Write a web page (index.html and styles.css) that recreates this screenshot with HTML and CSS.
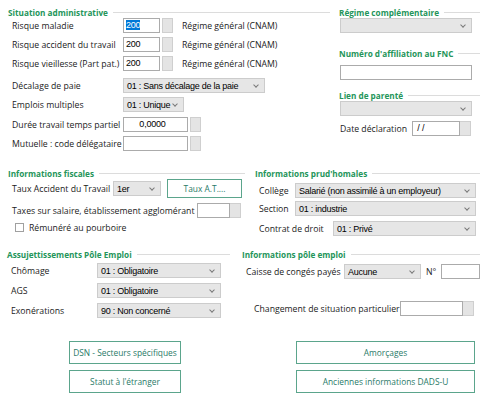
FILE: index.html
```html
<!DOCTYPE html>
<html>
<head>
    <link rel="stylesheet" href="styles.css">
</head>
<body>
    <div class="page">
        <!-- Situation administrative + side column -->
        <div class="section top">
            <div class="col col-admin">
                <div class="legend">Situation administrative</div>
                <div class="row">
                    <span class="lbl w-admin">Risque maladie</span>
                    <span class="inp w37"><span class="hl">200</span></span><span class="spin"></span>
                    <span class="note">Régime général (CNAM)</span>
                </div>
                <div class="row gap4">
                    <span class="lbl w-admin">Risque accident du travail</span>
                    <span class="inp w37">200</span><span class="spin"></span>
                    <span class="note">Régime général (CNAM)</span>
                </div>
                <div class="row gap4">
                    <span class="lbl w-admin">Risque vieillesse (Part pat.)</span>
                    <span class="inp w37">200</span><span class="spin"></span>
                    <span class="note">Régime général (CNAM)</span>
                </div>
                <div class="row gap7">
                    <span class="lbl w-admin">Décalage de paie</span>
                    <span class="sel w142">01 : Sans décalage de la paie</span>
                </div>
                <div class="row gap4">
                    <span class="lbl w-admin">Emplois multiples</span>
                    <span class="sel w61">01 : Unique</span>
                </div>
                <div class="row gap5">
                    <span class="lbl w-admin">Durée travail temps partiel</span>
                    <span class="inp w65 center">0,0000</span><span class="spin"></span>
                </div>
                <div class="row gap4">
                    <span class="lbl w-admin">Mutuelle : code délégataire</span>
                    <span class="inp w65"></span><span class="spin"></span>
                </div>
            </div>

            <div class="col col-side">
                <div class="legend">Régime complémentaire</div>
                <div class="row pad1">
                    <span class="sel w132"></span>
                </div>
                <div class="legend gap14">Numéro d'affiliation au FNC</div>
                <div class="row gap6 pad1">
                    <span class="inp w132"></span>
                </div>
                <div class="legend gap9">Lien de parenté</div>
                <div class="row pad1">
                    <span class="sel w132"></span>
                </div>
                <div class="row gap5 pad1">
                    <span class="lbl w-date">Date déclaration</span>
                    <span class="inp w48">&nbsp;/ /</span><span class="spin flush"></span>
                </div>
            </div>
        </div>

        <!-- Informations fiscales + prud'homales -->
        <div class="section mid">
            <div class="col col-fiscal">
                <div class="legend">Informations fiscales</div>
                <div class="row tall">
                    <span class="lbl w-taux">Taux Accident du Travail</span>
                    <span class="sel w48">1er</span>
                    <button class="btn-at">Taux A.T....</button>
                </div>
                <div class="row gap5">
                    <span class="lbl w-taxes">Taxes sur salaire, établissement agglomérant</span>
                    <span class="inp w33"></span><span class="spin flush"></span>
                </div>
                <div class="row gap4 check-row">
                    <span class="box"></span>
                    <span class="lbl">Rémunéré au pourboire</span>
                </div>
            </div>

            <div class="col col-prud">
                <div class="legend">Informations prud'homales</div>
                <div class="row gap4">
                    <span class="lbl w-prud">Collège</span>
                    <span class="sel w181">Salarié (non assimilé à un employeur)</span>
                </div>
                <div class="row gap3">
                    <span class="lbl w-prud">Section</span>
                    <span class="sel w181">01 : industrie</span>
                </div>
                <div class="row gap5">
                    <span class="lbl w-contrat">Contrat de droit</span>
                    <span class="sel w143">01 : Privé</span>
                </div>
            </div>
        </div>

        <!-- Pôle emploi -->
        <div class="section low">
            <div class="col col-assuj">
                <div class="legend">Assujettissements Pôle Emploi</div>
                <div class="row gap3">
                    <span class="lbl w-assuj">Chômage</span>
                    <span class="sel w124">01 : Obligatoire</span>
                </div>
                <div class="row gap5">
                    <span class="lbl w-assuj">AGS</span>
                    <span class="sel w124">01 : Obligatoire</span>
                </div>
                <div class="row gap5">
                    <span class="lbl w-assuj">Exonérations</span>
                    <span class="sel w124">90 : Non concerné</span>
                </div>
            </div>

            <div class="col col-pole">
                <div class="legend">Informations pôle emploi</div>
                <div class="row gap4">
                    <span class="lbl w-caisse">Caisse de congés payés</span>
                    <span class="sel w77">Aucune</span>
                    <span class="lbl w-num">N°</span>
                    <span class="inp w39"></span>
                </div>
                <div class="row gap22">
                    <span class="lbl w-chg">Changement de situation particulier</span>
                    <span class="inp w63"></span><span class="spin flush"></span>
                </div>
            </div>
        </div>

        <!-- Buttons -->
        <div class="section btns">
            <div class="btn-col narrow">
                <button class="btn">DSN - Secteurs spécifiques</button>
                <button class="btn">Statut à l'étranger</button>
            </div>
            <div class="btn-col wide">
                <button class="btn">Amorçages</button>
                <button class="btn">Anciennes informations DADS-U</button>
            </div>
        </div>
    </div>
</body>
</html>
```

FILE: styles.css
```css
body {
    margin: 0;
    background: #ffffff;
    font-family: "Open Sans", "Noto Sans", sans-serif;
    font-size: 8.7px;
    color: #1b1b1b;
}

.page {
    width: 485px;
    height: 399px;
    overflow: hidden;
}

.section {
    display: flex;
}

.top {
    padding-top: 6px;
}

.mid {
    margin-top: 16px;
}

.low {
    margin-top: 12px;
}

/* columns */
.col-admin {
    margin-left: 8px;
    width: 322px;
}

.col-side {
    margin-left: 9px;
    width: 141px;
}

.col-fiscal {
    margin-left: 8px;
    width: 237px;
}

.col-prud {
    margin-left: 10px;
    width: 225px;
}

.col-assuj {
    margin-left: 7px;
    width: 223px;
}

.col-pole {
    margin-left: 12px;
    width: 238px;
}

/* group titles with the grey rule */
.legend {
    display: flex;
    align-items: center;
    height: 12px;
    font-weight: 700;
    font-size: 8.2px;
    color: #24955a;
    white-space: nowrap;
}

.legend::after {
    content: "";
    flex: 1;
    height: 1px;
    margin-left: 5px;
    background: #dcdcdc;
}

.row {
    display: flex;
    align-items: center;
    height: 15px;
    padding-left: 4px;
    white-space: nowrap;
}

.row.tall {
    height: 19px;
}

.pad1 {
    padding-left: 1px;
}

.gap3 { margin-top: 3px; }
.gap4 { margin-top: 4px; }
.gap5 { margin-top: 5px; }
.gap6 { margin-top: 6px; }
.gap7 { margin-top: 7px; }
.gap9 { margin-top: 9px; }
.gap14 { margin-top: 14px; }
.gap22 { margin-top: 22px; }

/* label widths so controls line up */
.lbl { display: inline-block; }
.w-admin { width: 111px; }
.w-date { width: 72px; }
.w-taux { width: 101px; }
.w-taxes { width: 185px; }
.w-prud { width: 36px; }
.w-contrat { width: 74px; }
.w-assuj { width: 86px; }
.w-caisse { width: 98px; }
.w-num { width: 15px; padding-left: 5px; }
.w-chg { width: 146px; padding-left: 8px; }

.note {
    margin-left: 9px;
}

/* text inputs */
.inp {
    display: inline-block;
    box-sizing: border-box;
    height: 15px;
    border: 1px solid #ababab;
    background: #ffffff;
    font-family: "Liberation Sans", Arial, sans-serif;
    font-size: 9px;
    letter-spacing: -0.2px;
    line-height: 13px;
    padding-left: 2px;
    color: #000;
}

.inp.center {
    text-align: center;
    padding-left: 0;
    padding-right: 6px;
}

.hl {
    background: #0078d7;
    color: #ffffff;
}

.spin {
    display: inline-block;
    box-sizing: border-box;
    width: 11px;
    height: 15px;
    margin-left: 2px;
    background: #e4e4e4;
    border: 1px solid #cfcfcf;
}

.spin.flush {
    margin-left: 0;
    border-left: none;
}

/* combo boxes */
.sel {
    display: inline-flex;
    align-items: center;
    box-sizing: border-box;
    height: 15px;
    padding-left: 3px;
    padding-right: 16px;
    position: relative;
    background: #e6e6e6;
    border: 1px solid #cccccc;
    font-family: "Liberation Sans", Arial, sans-serif;
    font-size: 9px;
    letter-spacing: -0.25px;
    color: #000;
    overflow: hidden;
}

.sel::after {
    content: "";
    position: absolute;
    right: 6px;
    top: 4px;
    width: 3px;
    height: 3px;
    border-right: 1px solid #7a7a7a;
    border-bottom: 1px solid #7a7a7a;
    transform: rotate(45deg);
}

.w33 { width: 33px; }
.w37 { width: 37px; }
.w39 { width: 39px; }
.w48 { width: 48px; }
.w61 { width: 61px; }
.w63 { width: 63px; }
.w65 { width: 65px; }
.w77 { width: 77px; }
.w124 { width: 124px; }
.w132 { width: 132px; }
.w142 { width: 142px; }
.w143 { width: 143px; }
.w181 { width: 181px; }

/* checkbox */
.check-row {
    height: 11px;
    padding-left: 7px;
}

.box {
    display: inline-block;
    box-sizing: border-box;
    width: 9px;
    height: 9px;
    margin-right: 5px;
    border: 1px solid #a0a0a0;
    background: #fff;
}

/* buttons */
.btn-at {
    box-sizing: border-box;
    width: 75px;
    height: 19px;
    margin-left: 6px;
    background: #ffffff;
    border: 1px solid #5ba58c;
    color: #2a7a68;
    font-family: "Open Sans", sans-serif;
    font-size: 8.4px;
    padding: 0;
}

.btns {
    margin-top: 23px;
    padding-left: 69px;
}

.btn-col {
    display: flex;
    flex-direction: column;
    gap: 6px;
}

.btn-col.narrow {
    width: 112px;
}

.btn-col.wide {
    width: 179px;
    margin-left: 115px;
}

.btn {
    box-sizing: border-box;
    height: 23px;
    width: 100%;
    background: #ffffff;
    border: 1px solid #5ba58c;
    color: #2a7a68;
    font-family: "Open Sans", sans-serif;
    font-size: 8.4px;
    padding: 0;
}
```
